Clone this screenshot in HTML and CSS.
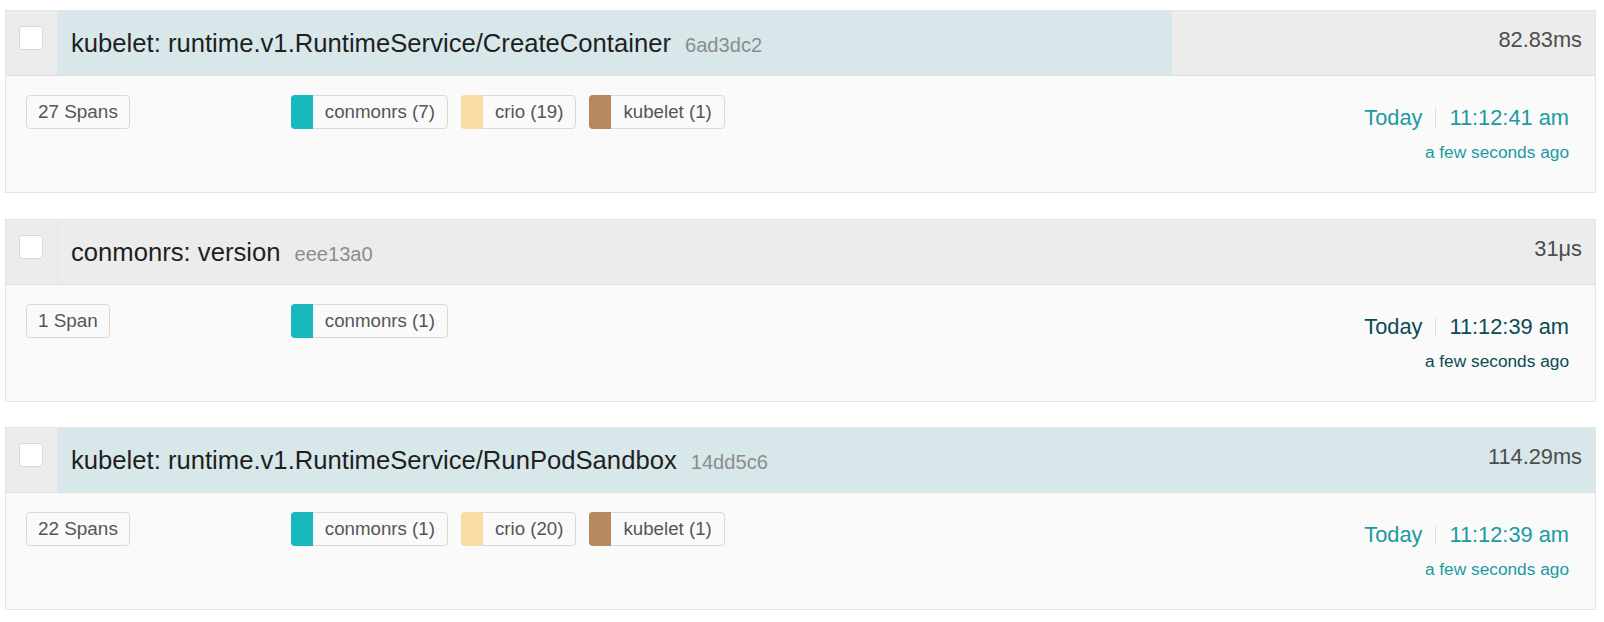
FILE: index.html
```html
<!DOCTYPE html>
<html>
<head>
<meta charset="utf-8">
<link rel="stylesheet" href="styles.css">
</head>
<body>
<div class="results">

  <div class="card">
    <div class="head">
      <div class="check-col"><span class="checkbox"></span></div>
      <div class="title-area">
        <div class="bar" style="width: 72.47%"></div>
        <h3 class="title">kubelet: runtime.v1.RuntimeService/CreateContainer<small class="trace-id">6ad3dc2</small></h3>
        <span class="duration">82.83ms</span>
      </div>
    </div>
    <div class="body">
      <div class="col-spans"><span class="tag">27 Spans</span></div>
      <div class="col-services">
        <span class="svc"><span class="swatch sw-conmonrs"></span><span class="svc-name">conmonrs (7)</span></span>
        <span class="svc"><span class="swatch sw-crio"></span><span class="svc-name">crio (19)</span></span>
        <span class="svc"><span class="swatch sw-kubelet"></span><span class="svc-name">kubelet (1)</span></span>
      </div>
      <div class="col-time">
        <div class="time-line"><span>Today</span><span class="divider"></span><span>11:12:41 am</span></div>
        <div class="ago">a few seconds ago</div>
      </div>
    </div>
  </div>

  <div class="card">
    <div class="head">
      <div class="check-col"><span class="checkbox"></span></div>
      <div class="title-area">
        <div class="bar" style="width: 0.03%"></div>
        <h3 class="title">conmonrs: version<small class="trace-id">eee13a0</small></h3>
        <span class="duration">31μs</span>
      </div>
    </div>
    <div class="body">
      <div class="col-spans"><span class="tag">1 Span</span></div>
      <div class="col-services">
        <span class="svc"><span class="swatch sw-conmonrs"></span><span class="svc-name">conmonrs (1)</span></span>
      </div>
      <div class="col-time dark">
        <div class="time-line"><span>Today</span><span class="divider"></span><span>11:12:39 am</span></div>
        <div class="ago">a few seconds ago</div>
      </div>
    </div>
  </div>

  <div class="card">
    <div class="head">
      <div class="check-col"><span class="checkbox"></span></div>
      <div class="title-area">
        <div class="bar" style="width: 100%"></div>
        <h3 class="title">kubelet: runtime.v1.RuntimeService/RunPodSandbox<small class="trace-id">14dd5c6</small></h3>
        <span class="duration">114.29ms</span>
      </div>
    </div>
    <div class="body">
      <div class="col-spans"><span class="tag">22 Spans</span></div>
      <div class="col-services">
        <span class="svc"><span class="swatch sw-conmonrs"></span><span class="svc-name">conmonrs (1)</span></span>
        <span class="svc"><span class="swatch sw-crio"></span><span class="svc-name">crio (20)</span></span>
        <span class="svc"><span class="swatch sw-kubelet"></span><span class="svc-name">kubelet (1)</span></span>
      </div>
      <div class="col-time">
        <div class="time-line"><span>Today</span><span class="divider"></span><span>11:12:39 am</span></div>
        <div class="ago">a few seconds ago</div>
      </div>
    </div>
  </div>

</div>
</body>
</html>
```

FILE: styles.css
```css
html, body {
  margin: 0;
  padding: 0;
  background: #ffffff;
}

body {
  font-family: "Liberation Sans", Arial, sans-serif;
  color: rgba(0, 0, 0, 0.85);
}

.results {
  padding: 10px 8px 0 5px;
  display: flex;
  flex-direction: column;
  gap: 25.5px;
}

.card {
  border: 1px solid #e4e4e4;
  background: #fafafa;
}

.head {
  display: flex;
  height: 64px;
  background: #ececec;
  border-bottom: 1px solid #dedede;
}

.check-col {
  width: 51px;
  flex: none;
  box-sizing: border-box;
  padding: 15px 0 0 13px;
}

.checkbox {
  display: block;
  width: 24px;
  height: 24px;
  box-sizing: border-box;
  background: #ffffff;
  border: 1px solid #d9d9d9;
  border-radius: 3px;
}

.title-area {
  flex: 1;
  position: relative;
  display: flex;
  align-items: center;
  min-width: 0;
}

.bar {
  position: absolute;
  left: 0;
  top: 0;
  bottom: 0;
  min-width: 1px;
  background: #d8e7ea;
}

.title {
  position: relative;
  flex: 1;
  margin: 0;
  padding: 1px 0 0 14px;
  font-size: 25.65px;
  font-weight: normal;
  color: #1f1f1f;
  white-space: nowrap;
}

.trace-id {
  font-size: 20.1px;
  color: #8c8c8c;
  margin-left: 14px;
}

.duration {
  position: relative;
  align-self: flex-start;
  padding: 16px 13px 0 0;
  font-size: 21.8px;
  color: #4d4d4d;
}

.body {
  display: grid;
  grid-template-columns: 1fr 4fr 1fr;
  height: 116px;
}

.col-spans,
.col-services {
  padding: 19px 20px 0 20px;
}

.col-services {
  display: flex;
  align-items: flex-start;
  gap: 13px;
}

.tag {
  display: inline-flex;
  align-items: center;
  height: 34px;
  box-sizing: border-box;
  padding: 0 11px;
  border: 1px solid #d9d9d9;
  border-radius: 4px;
  background: #fafafa;
  font-size: 18.9px;
  color: #555555;
}

.svc {
  display: inline-flex;
  align-items: stretch;
  height: 34px;
  box-sizing: border-box;
  border: 1px solid #d9d9d9;
  border-radius: 4px;
  background: #fafafa;
}

.swatch {
  width: 22px;
  margin: -1px 0 -1px -1px;
  border-radius: 4px 0 0 4px;
}

.sw-conmonrs { background: #17b8be; }
.sw-crio { background: #f8dca1; }
.sw-kubelet { background: #b7885e; }

.svc-name {
  display: flex;
  align-items: center;
  padding: 0 12px;
  font-size: 18.7px;
  color: #555555;
}

.col-time {
  padding: 29px 26px 0 0;
  text-align: right;
  color: #1a9ba2;
}

.col-time.dark {
  color: #0a4c54;
}

.time-line {
  display: flex;
  justify-content: flex-end;
  align-items: center;
  font-size: 21.8px;
}

.divider {
  display: inline-block;
  width: 1px;
  height: 20px;
  margin: 0 13px;
  background: #dddddd;
}

.ago {
  margin-top: 11px;
  font-size: 17.3px;
}
```
